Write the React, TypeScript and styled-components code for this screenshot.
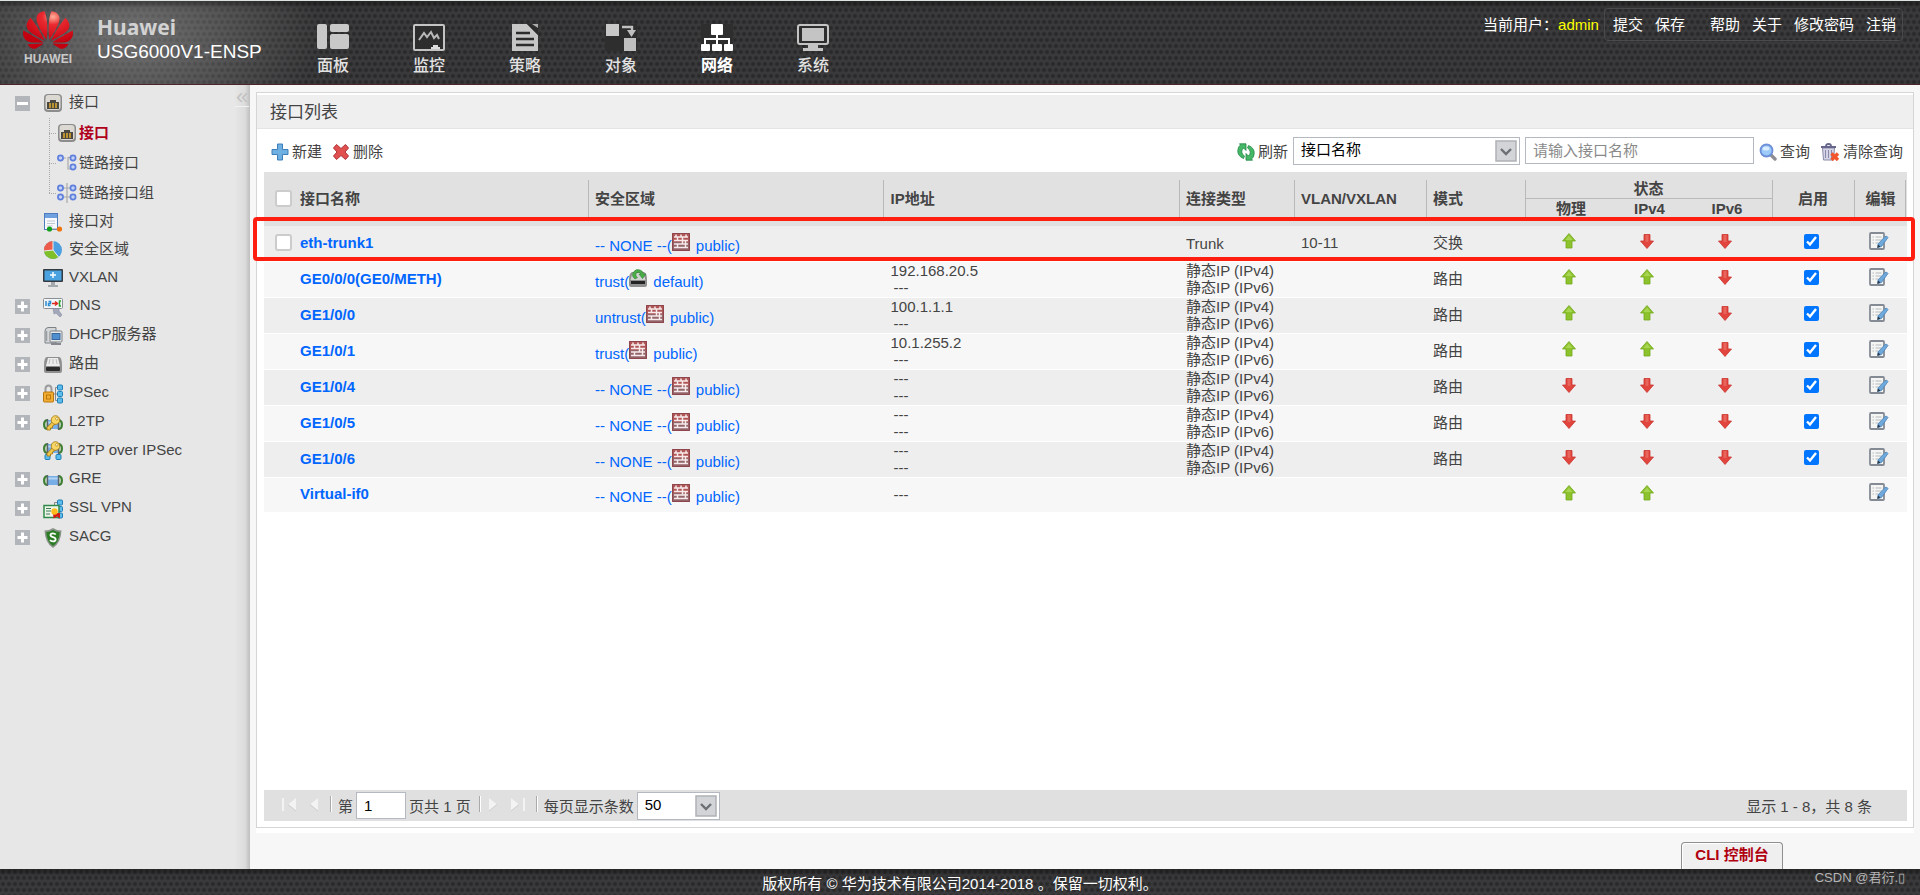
import React from 'react';
import styled, { createGlobalStyle, css } from 'styled-components';
import { SiHuawei } from 'react-icons/si';

const sans = `"Liberation Sans", Arial, "Noto Sans CJK SC", sans-serif`;

const GlobalStyle = createGlobalStyle`
  *, *::before, *::after { box-sizing: border-box; }
  body { margin: 0; font: 15px/17px ${sans}; color: #444; background: #f7f7f7; }
  button, input, select { font: inherit; color: inherit; }
  button { border: 0; padding: 0; background: none; cursor: pointer; }
  a { text-decoration: none; color: inherit; }
  svg { display: block; flex: none; }
`;

const studs = css`
  background-color: #3b3b3d;
  background-image:
    linear-gradient(rgba(0, 0, 0, 0.35), transparent 8px),
    radial-gradient(ellipse 190px 120px at 130px 35px, rgba(170, 170, 170, 0.5), transparent),
    radial-gradient(circle at 3px 3px, #29292a 1px, transparent 3px),
    radial-gradient(circle at 3px 3px, #29292a 1px, transparent 3px);
  background-size: 100% 100%, 100% 100%, 6px 12px, 6px 12px;
  background-position: 0 0, 0 0, 0 0, 3px 6px;
`;

const Page = styled.div`
  min-height: 100vh;
  display: flex;
  flex-direction: column;
`;

/* ---------- top bar ---------- */
const Header = styled.header`
  ${studs}
  height: 85px;
  display: flex;
  border-top: 1px solid #dde3e0;
  border-bottom: 1px solid #4b2528;
  color: #fff;
`;
const Brand = styled.div`
  width: 285px;
  padding: 10px 0 0 23px;
  display: flex;
  gap: 24px;
`;
const Logo = styled.div`
  width: 50px;
  height: 54px;
  overflow: hidden;
  text-align: center;
  font-size: 12px;
  font-weight: bold;
  line-height: 16px;
  color: #c9c9c9;
`;
const Flower = styled(SiHuawei)`
  fill: url(#petals);
  width: 50px;
  height: 50px;
  margin: -6px 0 -4px;
`;
const BrandText = styled.div`
  padding-top: 4px;
  font-size: 19px;
  line-height: 26px;
  white-space: nowrap;
`;
const BrandName = styled.div`
  font: bold 21px/24px "Noto Sans", sans-serif;
  color: #d2d2d2;
`;
const Nav = styled.nav`
  display: flex;
`;
const NavItem = styled.a<{ $active?: boolean }>`
  width: 96px;
  padding-top: 23px;
  display: flex;
  flex-direction: column;
  align-items: center;
  gap: 4px;
  font-size: 16px;
  line-height: 20px;
  font-weight: ${(p) => (p.$active ? 'bold' : '500')};
  color: ${(p) => (p.$active ? '#fff' : '#e2e2e2')};
`;
const Account = styled.div`
  margin-left: auto;
  padding: 7px 17px 0 0;
  display: flex;
  align-items: flex-start;
  line-height: 33px;
  white-space: nowrap;
`;
const UserName = styled.span`
  color: #ff0;
  margin-right: 5px;
`;
const AccountBox = styled.div`
  display: flex;
  border: 1px solid #4a4a4c;
  border-radius: 4px;
  height: 33px;
  line-height: 31px;
  padding: 0 6px 0 8px;
  gap: 12px;
`;
const AccountGroup = styled.div`
  display: flex;
  gap: 12px;
  & + & { margin-left: 13px; }
`;

/* ---------- side tree ---------- */
const Body = styled.div`
  flex: 1;
  display: flex;
`;
const Side = styled.aside`
  position: relative;
  width: 250px;
  flex: none;
  padding-top: 3px;
  background: linear-gradient(to right, #e7e7e7 234px, #dcdcdc 245px, #bebebe);
`;
const Collapse = styled.button`
  position: absolute;
  top: 2px;
  right: 1px;
  width: 14px;
  height: 20px;
  font-size: 22px;
  line-height: 16px;
  color: #c3c3c3;
  border-bottom: 1px solid #f2f2f2;
`;
const Tree = styled.ul`
  list-style: none;
  margin: 0;
  padding: 0;
`;
const TreeRow = styled.li<{ $h: number }>`
  height: ${(p) => p.$h}px;
  padding-left: 15px;
  display: flex;
  align-items: center;
`;
const Expander = styled.button`
  width: 15px;
  height: 15px;
  background: #b2b5b9;
  display: grid;
  place-items: center;
`;
const NoExpander = styled.span`
  width: 15px;
`;
const TreeLink = styled.a`
  display: flex;
  align-items: center;
  margin-left: 13px;
  gap: 6px;
`;
const TreeLabel = styled.span`
  padding-bottom: 4px;
`;
const SubList = styled.ul`
  list-style: none;
  margin: 0 0 0 49px;
  padding: 0;
`;
const SubRow = styled.li`
  height: 30px;
  background-image:
    repeating-linear-gradient(to right, #aaa 0 1px, transparent 1px 2px),
    repeating-linear-gradient(#aaa 0 1px, transparent 1px 2px);
  background-size: 8px 1px, 1px 30px;
  background-position: 0 50%, 0 0;
  background-repeat: no-repeat;
  &:last-child { background-size: 8px 1px, 1px 15px; }
`;
const SubLink = styled.a`
  height: 30px;
  margin-left: 8px;
  display: flex;
  align-items: center;
  gap: 2px;
`;
const SubLabel = styled.span<{ $active?: boolean }>`
  padding-bottom: 2px;
  ${(p) => p.$active && 'color: #b0001c; font-weight: bold;'}
`;

/* ---------- main panel ---------- */
const Main = styled.main`
  flex: 1;
  min-width: 0;
  padding: 7px 6px 0;
  display: flex;
  flex-direction: column;
`;
const Panel = styled.section`
  flex: 1;
  display: flex;
  flex-direction: column;
  background: #fff;
  border: 1px solid #d5d5d5;
  padding-top: 2px;
  box-shadow: 0 5px #fff;
`;
const PanelTitle = styled.h1`
  margin: 0;
  height: 34px;
  padding-left: 13px;
  font-size: 17px;
  font-weight: normal;
  line-height: 35px;
  background: #efefef;
  border-bottom: 1px solid #e4e4e4;
`;
const Toolbar = styled.div`
  height: 43px;
  padding: 0 10px 0 14px;
  display: flex;
  align-items: center;
`;
const ToolGroup = styled.div`
  display: flex;
  align-items: center;
  gap: 10px;
`;
const Search = styled.form`
  margin-left: auto;
  display: flex;
  align-items: center;
  gap: 5px;
`;
const ToolButton = styled.button`
  padding-top: 2px;
  display: flex;
  align-items: center;
  gap: 3px;
  white-space: nowrap;
  line-height: 20px;
`;
const SelectBox = styled.span<{ $w: number }>`
  position: relative;
  width: ${(p) => p.$w}px;
  height: 28px;
  select {
    appearance: none;
    width: 100%;
    height: 28px;
    padding: 0 30px 2px 7px;
    border: 1px solid #b4b8c0;
    border-radius: 0;
    background: #fff;
    color: #000;
  }
  svg {
    position: absolute;
    top: 3px;
    right: 3px;
    pointer-events: none;
  }
`;
const TextBox = styled.input<{ $w: number }>`
  width: ${(p) => p.$w}px;
  height: 27px;
  padding: 0 7px;
  border: 1px solid #b4b8c0;
  background: #fff;
  color: #000;
  &::placeholder { color: #8a8a8a; opacity: 1; }
`;
const GridArea = styled.div`
  flex: 1;
  position: relative;
  margin: 0 6px 0 7px;
`;
const Grid = styled.table`
  width: 100%;
  table-layout: fixed;
  border-collapse: collapse;
  td, th { padding: 0; text-align: left; }
`;
const ruleV = 'linear-gradient(#b9b9b9, #b9b9b9) no-repeat';
const HeadRow = styled.tr`
  height: 27px;
  background: #e1e1e1;
`;
const Th = styled.th<{ $rule?: boolean; $end?: boolean; $center?: boolean }>`
  && {
    padding-left: ${(p) => (p.$center ? 0 : 7)}px;
    padding-bottom: 2px;
    text-align: ${(p) => (p.$center ? 'center' : 'left')};
  }
  background: ${(p) => (p.$end ? `${ruleV} right 1px top 8px / 1px 38px,` : '')}
    ${(p) => (p.$rule === false ? 'none' : `${ruleV} 0 8px / 1px 38px`)};
`;
const GroupTh = styled.th`
  && { text-align: center; padding-top: 6px; }
  background: ${ruleV} 0 8px / 1px 30px, ${ruleV} 0 100% / 100% 1px;
`;
const SubTh = styled.th<{ $first?: boolean }>`
  && { text-align: center; padding: 0 0 9px; }
  background: ${(p) => (p.$first ? `${ruleV} 0 0 / 1px 19px` : 'none')};
`;
const Row = styled.tr<{ $tall: boolean }>`
  height: ${(p) => (p.$tall ? 36 : 35)}px;
  background: #f7f7f7;
  border-bottom: 1px solid #fff;
  &:nth-child(odd) { background: #eee; }
`;
const Td = styled.td`
  && { padding-left: 7px; }
`;
const LineTd = styled.td<{ $pad?: number }>`
  && { padding: 0 0 2px ${(p) => p.$pad ?? 7}px; }
`;
const IconTd = styled.td`
  && { text-align: center; padding: 0 4px 6px 0; }
  svg { display: inline-block; vertical-align: middle; }
`;
const NameCell = styled.div`
  display: flex;
  align-items: center;
  gap: 8px;
  padding-left: 11px;
`;
const PickBox = styled.input`
  appearance: none;
  margin: 0;
  width: 17px;
  height: 17px;
  border: 2px solid #ccc;
  border-radius: 3px;
  background: #fff;
`;
const NoPick = styled.span`
  width: 17px;
`;
const NameLink = styled.a`
  color: #06f;
  font-weight: bold;
`;
const ZoneLink = styled.a`
  color: #06f;
  svg { display: inline-block; vertical-align: baseline; margin-right: 2px; }
`;
const Enable = styled.input`
  width: 15px;
  height: 15px;
  margin: 0;
  vertical-align: middle;
  accent-color: #0075ff;
`;
const Dash = styled.div`
  padding-left: 3px;
`;
const Highlight = styled.div`
  position: absolute;
  top: 45px;
  left: -11px;
  right: -8px;
  height: 44px;
  border: 4px solid #ff1e10;
  border-radius: 4px;
  pointer-events: none;
`;
const Pager = styled.div`
  height: 31px;
  margin: 0 6px 6px 7px;
  padding: 0 32px 0 17px;
  display: flex;
  align-items: center;
  background: #e0e0e0;
  white-space: nowrap;
`;
const PageButton = styled.button`
  width: 17px;
  height: 24px;
  margin-right: 5px;
  padding-bottom: 2px;
`;
const Sep = styled.i`
  width: 2px;
  height: 16px;
  margin: 0 6px 4px 5px;
  background: linear-gradient(to right, #aaa 1px, #fff 1px);
`;
const PagerText = styled.span`
  padding: 2px 3px 0 0;
`;
const PageCount = styled(PagerText)`
  padding-left: 3px;
`;
const PagerStatus = styled(PagerText)`
  margin-left: auto;
`;
const ConsoleBar = styled.div`
  height: 41px;
  padding-right: 131px;
  display: flex;
  justify-content: flex-end;
  align-items: flex-end;
`;
const ConsoleButton = styled.button`
  width: 102px;
  height: 27px;
  padding-bottom: 4px;
  border: 1px solid #8f8f8f;
  border-bottom: 0;
  border-radius: 4px 4px 0 0;
  background: #efefef;
  box-shadow: inset 1px 1px #fff;
  color: #b0000f;
  font-weight: bold;
`;
const Footer = styled.footer`
  ${studs}
  background-position: 0 0, -400px 0, 0 0, 3px 6px;
  background-repeat: repeat, no-repeat, repeat, repeat;
  position: relative;
  height: 26px;
  padding-top: 2px;
  text-align: center;
  line-height: 26px;
  color: #fff;
`;
const Watermark = styled.span`
  position: absolute;
  right: 15px;
  top: -4px;
  font-size: 13px;
  color: #b5b5b5;
`;

/* ---------- icons ---------- */
const navIcons: Record<string, React.ReactNode> = {
  panel: (
    <g fill="#c8c8c8">
      <rect x="0" y="0" width="10" height="25" rx="2" />
      <rect x="13" y="0" width="19" height="8" rx="2" />
      <rect x="13" y="10" width="19" height="15" rx="2" />
    </g>
  ),
  monitor: (
    <g>
      <rect x="1" y="1" width="30" height="25" rx="1" fill="#2d2d2d" stroke="#c4c4c4" strokeWidth="2" />
      <path d="M6 16l5-7 3 4 4-5 3 6 3-3 2 4" fill="none" stroke="#b9b9b9" strokeWidth="2" />
      <path d="M18 25v-2h2v-2h5v2h2v2z" fill="#ddd" />
    </g>
  ),
  policy: (
    <g>
      <path d="M3 0h15l11 11v16H3z" fill="#c6c6c6" />
      <path d="M18 0l11 11V5L23 0z" fill="#2c2c2c" />
      <path d="M23 0h6v4z" fill="#ababab" />
      <path d="M7 9h14M7 15h18M7 21h18" stroke="#2c2c2c" strokeWidth="2.4" />
    </g>
  ),
  object: (
    <g>
      <rect width="32" height="27" fill="#2e2e2e" />
      <rect x="1" y="0" width="13" height="12" fill="#c8c8c8" />
      <rect x="19" y="14" width="12" height="13" fill="#c0c0c0" />
      <path d="M17 3h10v4" fill="none" stroke="#c0c0c0" strokeWidth="2.4" />
      <path d="M22 6h9l-4.500 7z" fill="#c0c0c0" />
    </g>
  ),
  network: (
    <g>
      <rect width="32" height="27" fill="#2e2e2e" />
      <path d="M16 10v10M4 20v-5h24v5" fill="none" stroke="#fff" strokeWidth="2" />
      <rect x="10" y="0" width="12" height="11" rx="1" fill="#fff" />
      <rect x="0" y="20" width="9" height="7" rx="1" fill="#fff" />
      <rect x="11" y="20" width="10" height="7" rx="1" fill="#fff" />
      <rect x="23" y="20" width="9" height="7" rx="1" fill="#fff" />
    </g>
  ),
  system: (
    <g>
      <rect x="1" y="1" width="30" height="19" rx="2" fill="#2e2e2e" stroke="#c4c4c4" strokeWidth="2" />
      <rect x="5" y="4" width="22" height="13" fill="#c4c4c4" />
      <path d="M11 20h10v4h5v3H6v-3h5z" fill="#c4c4c4" />
    </g>
  ),
};
const NavIcon = ({ name }: { name: string }) => (
  <svg width="32" height="28" viewBox="0 0 32 28" aria-hidden>{navIcons[name]}</svg>
);

const tunnel = (
  <g>
    <path d="M5 6Q1 6 1 10.500T5 15" fill="#b9d3b0" stroke="#3f7f35" strokeWidth="2" />
    <path d="M15 6q4 0 4 4.500T15 15" fill="#b9d3b0" stroke="#3f7f35" strokeWidth="2" />
    <rect x="5" y="6" width="10" height="9" fill="#78aee6" />
    <path d="M5 8.500h10" stroke="#b4d4f5" strokeWidth="2" />
    <path d="M4.500 5v11M15.500 5v11" stroke="#5b6270" strokeWidth="1.400" />
  </g>
);
const key = (
  <g>
    <path d="M10 7l-6 6.500V16h3.500v-2h2v-2l3-2" fill="#f2c648" stroke="#a3750e" strokeWidth=".8" />
    <circle cx="12.500" cy="6" r="4.300" fill="#f8d665" stroke="#a3750e" strokeWidth=".8" />
    <circle cx="13.800" cy="4.800" r="1.300" fill="#fff6cf" stroke="#a3750e" strokeWidth=".6" />
  </g>
);
const blueBoxes = (
  <g fill="#5cbcec" stroke="#1f7fb5">
    <rect x="14.500" y="1" width="5" height="5" rx="1" />
    <rect x="14.500" y="7.500" width="5" height="5" rx="1" />
    <rect x="14.500" y="14" width="5" height="5" rx="1" />
  </g>
);
const node = (cx: number, cy: number) => (
  <circle cx={cx} cy={cy} r="2.600" fill="#c4d2f6" stroke="#5f7fdc" strokeWidth="1.700" />
);
const treeIcons: Record<string, React.ReactNode> = {
  port: (
    <g>
      <rect x="1" y="1" width="18" height="18" rx="4" fill="#8c8c8c" />
      <rect x="2.500" y="2" width="15" height="15" rx="3" fill="#dcd8d2" />
      <path d="M4 9h3V7h6v2h3v7H4z" fill="#4b4843" />
      <path d="M7 10v5M10 10v5M13 10v5" stroke="#d8a62c" strokeWidth="1.600" />
    </g>
  ),
  link: (
    <g>
      <path d="M7 5h2M11 4v12h3M11 4.500h3" fill="none" stroke="#aaa" strokeWidth="1.200" />
      {node(3.5, 5)}{node(16, 5)}{node(16, 14)}
    </g>
  ),
  linkGroup: (
    <g>
      <path d="M10 0v20M6 5h8M6 14h8" stroke="#aaa" strokeWidth="1.200" />
      {node(3.5, 5)}{node(16, 5)}{node(3.5, 14)}{node(16, 14)}
    </g>
  ),
  pair: (
    <g>
      <rect x="1.500" y="1.500" width="13" height="16" fill="#f7f9fc" stroke="#4f7bbf" />
      <rect x="2" y="2" width="12" height="4" fill="#6fa0df" />
      <path d="M4 9h8M4 11.500h8M4 14h6" stroke="#c2c8d2" />
      <path d="M7 17h9" stroke="#999" />
      <circle cx="6.500" cy="17" r="2.600" fill="#12a01c" />
      <circle cx="16.500" cy="17" r="2.600" fill="#f0720c" />
    </g>
  ),
  zone: (
    <g>
      <circle cx="10" cy="10" r="9" fill="#4d9fe0" />
      <path d="M10 10L1 11A9 9 0 0 1 10 1z" fill="#ef5b4a" />
      <path d="M10 10L1 11A9 9 0 0 0 15.500 17z" fill="#7fc02a" />
      <path d="M10 1v9l5.500 7M10 10l-9 1" stroke="#eee" fill="none" />
    </g>
  ),
  vxlan: (
    <g>
      <rect x="0" y="1" width="20" height="13" rx="1" fill="#333a42" />
      <rect x="1.500" y="2.500" width="17" height="10" fill="#4aa3e0" />
      <path d="M10 4v6M7 7h6" stroke="#fff" strokeWidth="1.400" />
      <path d="M8 14h4v3h3v2H5v-2h3z" fill="#a4a9ad" />
    </g>
  ),
  dns: (
    <g>
      <rect x="0.500" y="1.500" width="19" height="10" rx="1" fill="#f2f6f8" stroke="#8a8f94" />
      <path d="M3 4v5M5.500 4.500h2v2h-2v2h2" stroke="#2b8cd0" fill="none" strokeWidth="1.500" />
      <path d="M9 6.500h5M12 4.500l2.500 2-2.500 2" stroke="#e02b20" fill="none" strokeWidth="1.500" />
      <path d="M18 4h-1.500v5H18" stroke="#2fa32b" fill="none" strokeWidth="1.500" />
      <path d="M10 11.500h6V14l3 4-2 2-4-4-2 1z" fill="#a3a8ba" stroke="#868b9a" strokeWidth=".6" />
    </g>
  ),
  dhcp: (
    <g>
      <path d="M2 5q0-3 3-3.500h8V17H2z" fill="#d4d6d8" stroke="#7d8186" />
      <path d="M3.500 5v10" stroke="#9a9ea2" strokeWidth="1.500" />
      <rect x="7" y="5" width="12" height="11" rx="1" fill="#e6e8ea" stroke="#7d8186" />
      <rect x="9" y="7.500" width="8" height="6" fill="#4f8fcf" stroke="#36669a" />
      <path d="M8 18h10" stroke="#85898d" strokeWidth="2" />
    </g>
  ),
  route: (
    <g>
      <path d="M4 2h12q3 0 3 9v5q0 2-2 2H3q-2 0-2-2v-5q0-9 3-9z" fill="#8f8f8f" />
      <path d="M5 3h10l2 8H3z" fill="#ededed" />
      <path d="M7 4L6 9M10 4v5M13 4l1 5" stroke="#bcbcbc" />
      <rect x="3" y="12" width="14" height="4" rx="1" fill="#2c2c2c" />
    </g>
  ),
  ipsec: (
    <g>
      <path d="M11 10h4M12.500 3.500v13M12.500 3.500h3M12.500 16.500h3" stroke="#888" fill="none" />
      {blueBoxes}
      <path d="M2.500 8V5q0-3.500 3-3.500t3 3.500v3" fill="none" stroke="#9c9c9c" strokeWidth="2" />
      <rect x="0.500" y="8" width="10" height="10" rx="1" fill="#f3ad2e" stroke="#b87612" />
      <rect x="3.500" y="11" width="4" height="4" fill="none" stroke="#b87612" />
    </g>
  ),
  l2tp: <g><g transform="translate(0 1)">{tunnel}</g><g transform="translate(0 1)">{key}</g></g>,
  l2tpIpsec: (
    <g>
      <g transform="translate(0 -3)">{tunnel}</g>
      <g fill="#5cbcec" stroke="#1f7fb5">
        <rect x="2" y="13.500" width="5" height="5" rx="1" />
        <rect x="13" y="13.500" width="5" height="5" rx="1" />
      </g>
      <g transform="translate(0 -1)">{key}</g>
    </g>
  ),
  gre: tunnel,
  ssl: (
    <g>
      <path d="M11.500 6V3.500h4" stroke="#888" fill="none" />
      {blueBoxes}
      <rect x="1" y="6.500" width="15" height="12" fill="#eef6ea" stroke="#2f8a4a" strokeWidth="1.500" />
      <path d="M3 9.500h5M3 12h5M3 15h4" stroke="#3b7a55" />
      <path d="M10 14h7v5.500l-3-2-3.500 2z" fill="#d21a12" />
      <circle cx="11.500" cy="12.500" r="3.200" fill="#fbbd1c" />
    </g>
  ),
  sacg: (
    <g>
      <path d="M10 0q4 2.500 8.500 2.500Q18 15 10 20 2 15 1.500 2.500 6 2.500 10 0z" fill="#8b938b" />
      <path d="M10 2q3 2 6.800 2.200Q16 14 10 18 4 14 3.200 4.200 7 4 10 2z" fill="#2a7d22" />
      <path d="M12.800 6.500q-1-1.200-3-1.200-2.300 0-2.300 1.800 0 1.400 2.500 2 2.600.6 2.600 2.300 0 1.900-2.600 1.900-2 0-3-1.300" fill="none" stroke="#fff" strokeWidth="1.800" />
    </g>
  ),
};
const TreeIcon = ({ name }: { name: string }) => (
  <svg width="20" height="20" viewBox="0 0 20 20" aria-hidden>{treeIcons[name]}</svg>
);
const Small = ({ children }: { children: React.ReactNode }) => (
  <svg width="18" height="18" viewBox="0 0 18 18" aria-hidden>{children}</svg>
);
const AddIcon = () => (
  <Small><path d="M6.500 1h5v5.500H17v5h-5.500V17h-5v-5.500H1v-5h5.500z" fill="#6fb0e2" stroke="#3f7fb8" strokeLinejoin="round" /></Small>
);
const DeleteIcon = () => (
  <Small><path d="M4.500 1.500L9 5.500l4.500-4 3 3.500-3.500 4 3.500 4-3 3.500-4.500-4-4.500 4-3-3.500L5 9 1.500 5z" fill="#e0504f" stroke="#b03236" strokeLinejoin="round" /></Small>
);
const RefreshIcon = () => (
  <Small>
    <path d="M6.500 15.500Q.5 13 .8 7.500 1 3.500 3.500 2L2.500.8H9V7.500L6.700 5Q4.500 6.500 4.700 9q.2 2.500 2.800 4z" fill="#45b868" stroke="#1f8742" strokeLinejoin="round" strokeWidth=".8" />
    <path d="M11.500 2.500Q17.500 5 17.200 10.500 17 14.500 14.500 16l1 1.200H9V10.500l2.300 2.500q2.200-1.500 2-4-.2-2.500-2.800-4z" fill="#45b868" stroke="#1f8742" strokeLinejoin="round" strokeWidth=".8" />
  </Small>
);
const SearchIcon = () => (
  <Small>
    <path d="M11.500 11.500l4.500 4.500" stroke="#8d8d93" strokeWidth="3.400" strokeLinecap="round" />
    <circle cx="7.500" cy="7.500" r="6" fill="#9ccbfa" stroke="#6c8fd8" strokeWidth="1.800" />
    <ellipse cx="7" cy="5.500" rx="3.500" ry="2" fill="#d8edff" />
  </Small>
);
const ClearIcon = () => (
  <svg width="20" height="18" viewBox="0 0 20 18" aria-hidden>
    <path d="M2.500 5h12l-1 12h-10z" fill="#d4d4e6" stroke="#8a8aa8" />
    <path d="M5.500 7v8M8.500 7v8M11.500 7v8" stroke="#8a8aa8" />
    <path d="M1 4h15M6 3q0-2 2.500-2T11 3" fill="none" stroke="#66668c" strokeWidth="1.800" />
    <path d="M11.500 10.500l6.500 6.500M18 10.500L11.500 17" stroke="#f2552e" strokeWidth="3.400" />
  </svg>
);
const WallIcon = () => (
  <Small>
    <path d="M0 0h18v9H0z" fill="#b05656" />
    <path d="M0 9h18v9H0z" fill="#93656a" />
    <path d="M2 4h14M2 7.500h14M2 11h14M2 14.500h14M9 1.500v3M5.500 4v3.500M10.500 4v7M5.500 11v3.500M13.500 7.500v7M4 1.500v2M14 1.500v2" stroke="#f6eaea" strokeWidth="1.500" />
    <path d="M.5 .5h17v17H.5z" fill="none" stroke="#8e464c" />
  </Small>
);
const RouterIcon = () => (
  <Small>
    <path d="M3 3h12q3 1 3 8v5q0 2-2 2H2q-2 0-2-2v-5q0-7 3-8z" fill="#8f8f8f" />
    <path d="M3.500 4h11l2 7h-15z" fill="#cfd2cf" />
    <rect x="2" y="12" width="14" height="3" fill="#242424" />
    <path d="M6 10Q2 7 4.500 3 7-.5 11 1q3 1 3.500 4H17l-3.500 4.500L10 5h2Q11 3 9 3.200 6.500 3.500 6.800 6q.2 1.500 1.700 2.500z" fill="#4bae49" stroke="#27802c" strokeWidth=".6" />
  </Small>
);
const ArrowIcon = ({ up }: { up: boolean }) =>
  up ? (
    <svg width="14" height="16" viewBox="0 0 14 16" role="img" aria-label="up">
      <path d="M7 .5L13.500 8H10v7H4V8H.5z" fill="#8cc22c" stroke="#74a81e" strokeWidth=".8" strokeLinejoin="round" />
      <path d="M7 2.500L10.500 7H3.500z" fill="#a8d552" />
    </svg>
  ) : (
    <svg width="14" height="16" viewBox="0 0 14 16" role="img" aria-label="down">
      <path d="M4 1.500h6v6.500h3.500L7 15.500.5 8H4z" fill="#e2453d" stroke="#c9352f" strokeWidth=".8" strokeLinejoin="round" />
      <path d="M5.500 2v7h3V2z" fill="#e9655b" />
    </svg>
  );
const EditIcon = () => (
  <svg width="20" height="18" viewBox="0 0 20 18" aria-hidden>
    <rect x="1" y="1" width="14" height="16" rx="1" fill="#f5f6f4" stroke="#858b94" strokeWidth="1.800" />
    <path d="M3.500 5h1.500M3.500 8h1.500M3.500 11h1.500M6.500 5h6M6.500 8h6M6.500 11h3" stroke="#b5b9bd" />
    <path d="M9 12L16 4.500q2-1 3 1L12.500 14.500 9 15.500z" fill="#6fa9dc" stroke="#4a82b8" strokeWidth=".8" />
    <path d="M8 16l1-3.500 2.500 2z" fill="#2a3a4a" />
  </svg>
);
const DropArrow = () => (
  <svg width="22" height="22" viewBox="0 0 22 22" aria-hidden>
    <rect x="1" y="1" width="20" height="20" fill="#d2d4d7" stroke="#aeb1b6" strokeWidth="1.500" />
    <path d="M6 9l5 5 5-5" fill="none" stroke="#6c6f74" strokeWidth="2.400" />
  </svg>
);
const PageIcon = ({ dir, end }: { dir: 'l' | 'r'; end?: boolean }) => (
  <svg width="17" height="16" viewBox="0 0 17 16" aria-hidden>
    <g transform={dir === 'r' ? 'translate(17 0) scale(-1 1)' : undefined} fill="#f3f3f3">
      <path d="M15 1v13L7 7.500z" />
      <path d="M15 14L7 7.500" stroke="#cdcdcd" />
      {end && <rect x="1" y="1" width="2" height="13" />}
    </g>
  </svg>
);

/* ---------- data ---------- */
const nav = [
  ['panel', '面板'], ['monitor', '监控'], ['policy', '策略'],
  ['object', '对象'], ['network', '网络'], ['system', '系统'],
];
const subItems = [['port', '接口'], ['link', '链路接口'], ['linkGroup', '链路接口组']];
const treeItems: [string, string, boolean][] = [
  ['pair', '接口对', false], ['zone', '安全区域', false], ['vxlan', 'VXLAN', false],
  ['dns', 'DNS', true], ['dhcp', 'DHCP服务器', true], ['route', '路由', true],
  ['ipsec', 'IPSec', true], ['l2tp', 'L2TP', true], ['l2tpIpsec', 'L2TP over IPSec', false],
  ['gre', 'GRE', true], ['ssl', 'SSL VPN', true], ['sacg', 'SACG', true],
];
type Item = {
  name: string; zone: string; vsys: string; ip: string[]; type: string[];
  vlan?: string; mode?: string; state: boolean[]; enabled: boolean; pick?: boolean;
};
const both = ['静态IP (IPv4)', '静态IP (IPv6)'];
const items: Item[] = [
  { name: 'eth-trunk1', zone: '-- NONE --', vsys: 'public', ip: [], type: ['Trunk'], vlan: '10-11', mode: '交换', state: [true, false, false], enabled: true, pick: true },
  { name: 'GE0/0/0(GE0/METH)', zone: 'trust', vsys: 'default', ip: ['192.168.20.5', '---'], type: both, mode: '路由', state: [true, true, false], enabled: true },
  { name: 'GE1/0/0', zone: 'untrust', vsys: 'public', ip: ['100.1.1.1', '---'], type: both, mode: '路由', state: [true, true, false], enabled: true },
  { name: 'GE1/0/1', zone: 'trust', vsys: 'public', ip: ['10.1.255.2', '---'], type: both, mode: '路由', state: [true, true, false], enabled: true },
  { name: 'GE1/0/4', zone: '-- NONE --', vsys: 'public', ip: ['---', '---'], type: both, mode: '路由', state: [false, false, false], enabled: true },
  { name: 'GE1/0/5', zone: '-- NONE --', vsys: 'public', ip: ['---', '---'], type: both, mode: '路由', state: [false, false, false], enabled: true },
  { name: 'GE1/0/6', zone: '-- NONE --', vsys: 'public', ip: ['---', '---'], type: both, mode: '路由', state: [false, false, false], enabled: true },
  { name: 'Virtual-if0', zone: '-- NONE --', vsys: 'public', ip: ['---'], type: [], state: [true, true], enabled: false },
];
const colWidths = [324, 0, 0, 115, 132, 99, 92, 65, 90, 82, 53];

export default function App() {
  return (
    <Page>
      <GlobalStyle />
      <Header>
        <Brand>
          <Logo>
            <svg width="0" height="0" aria-hidden>
              <defs>
                <radialGradient id="petals" cx="60%" cy="15%" r="70%">
                  <stop offset="0" stopColor="#ffb09a" />
                  <stop offset="0.300" stopColor="#ea2a30" />
                  <stop offset="1" stopColor="#c3000f" />
                </radialGradient>
              </defs>
            </svg>
            <Flower aria-hidden />
            HUAWEI
          </Logo>
          <BrandText>
            <BrandName>Huawei</BrandName>
            USG6000V1-ENSP
          </BrandText>
        </Brand>
        <Nav>
          {nav.map(([icon, label]) => (
            <NavItem key={icon} href="#" $active={icon === 'network'}>
              <NavIcon name={icon} />
              {label}
            </NavItem>
          ))}
        </Nav>
        <Account>
          <span>当前用户：</span>
          <UserName>admin</UserName>
          <AccountBox>
            <AccountGroup>
              <a href="#">提交</a>
              <a href="#">保存</a>
            </AccountGroup>
            <AccountGroup>
              <a href="#">帮助</a>
              <a href="#">关于</a>
              <a href="#">修改密码</a>
              <a href="#">注销</a>
            </AccountGroup>
          </AccountBox>
        </Account>
      </Header>

      <Body>
        <Side>
          <Collapse aria-label="收起">«</Collapse>
          <Tree>
            <TreeRow $h={30}>
              <Expander aria-label="折叠">
                <svg width="15" height="15" aria-hidden><path d="M2 7.500h11" stroke="#fff" strokeWidth="3" /></svg>
              </Expander>
              <TreeLink href="#"><TreeIcon name="port" /><TreeLabel>接口</TreeLabel></TreeLink>
            </TreeRow>
            <li>
              <SubList>
                {subItems.map(([icon, label], i) => (
                  <SubRow key={label}>
                    <SubLink href="#"><TreeIcon name={icon} /><SubLabel $active={i === 0}>{label}</SubLabel></SubLink>
                  </SubRow>
                ))}
              </SubList>
            </li>
            {treeItems.map(([icon, label, expandable]) => (
              <TreeRow key={icon} $h={expandable ? 29 : 28}>
                {expandable ? (
                  <Expander aria-label="展开">
                    <svg width="15" height="15" aria-hidden><path d="M2.500 7.500h10M7.500 2.500v10" stroke="#fff" strokeWidth="3" /></svg>
                  </Expander>
                ) : <NoExpander />}
                <TreeLink href="#"><TreeIcon name={icon} /><TreeLabel>{label}</TreeLabel></TreeLink>
              </TreeRow>
            ))}
          </Tree>
        </Side>

        <Main>
          <Panel>
            <PanelTitle>接口列表</PanelTitle>
            <Toolbar>
              <ToolGroup>
                <ToolButton><AddIcon />新建</ToolButton>
                <ToolButton><DeleteIcon />删除</ToolButton>
              </ToolGroup>
              <Search onSubmit={(e) => e.preventDefault()}>
                <ToolButton type="button"><RefreshIcon />刷新</ToolButton>
                <SelectBox $w={227}>
                  <select aria-label="查询字段"><option>接口名称</option></select>
                  <DropArrow />
                </SelectBox>
                <TextBox $w={229} aria-label="查询内容" placeholder="请输入接口名称" />
                <ToolGroup>
                  <ToolButton type="submit"><SearchIcon />查询</ToolButton>
                  <ToolButton type="reset"><ClearIcon />清除查询</ToolButton>
                </ToolGroup>
              </Search>
            </Toolbar>

            <GridArea>
              <Grid>
                <colgroup>
                  {colWidths.map((w, i) => <col key={i} width={w || undefined} />)}
                </colgroup>
                <thead>
                  <HeadRow>
                    <Th rowSpan={2} $rule={false} $center>
                      <NameCell><PickBox type="checkbox" aria-label="全选" />接口名称</NameCell>
                    </Th>
                    <Th rowSpan={2}>安全区域</Th>
                    <Th rowSpan={2}>IP地址</Th>
                    <Th rowSpan={2}>连接类型</Th>
                    <Th rowSpan={2}>VLAN/VXLAN</Th>
                    <Th rowSpan={2}>模式</Th>
                    <GroupTh colSpan={3}>状态</GroupTh>
                    <Th rowSpan={2} $center>启用</Th>
                    <Th rowSpan={2} $center $end>编辑</Th>
                  </HeadRow>
                  <HeadRow>
                    <SubTh $first>物理</SubTh>
                    <SubTh>IPv4</SubTh>
                    <SubTh>IPv6</SubTh>
                  </HeadRow>
                </thead>
                <tbody>
                  {items.map((it) => (
                    <Row key={it.name} $tall={it.ip.length > 1}>
                      <LineTd $pad={0}>
                        <NameCell>
                          {it.pick ? <PickBox type="checkbox" aria-label={it.name} /> : <NoPick />}
                          <NameLink href="#">{it.name}</NameLink>
                        </NameCell>
                      </LineTd>
                      <Td>
                        <ZoneLink href="#">
                          {it.zone}({it.vsys === 'default' ? <RouterIcon /> : <WallIcon />} {it.vsys})
                        </ZoneLink>
                      </Td>
                      <Td>{it.ip.map((s, i) => (s === '---' ? <Dash key={i}>{s}</Dash> : <div key={i}>{s}</div>))}</Td>
                      <Td>{it.type.map((s) => <div key={s}>{s}</div>)}</Td>
                      <LineTd>{it.vlan}</LineTd>
                      <LineTd>{it.mode}</LineTd>
                      {[0, 1, 2].map((i) => (
                        <IconTd key={i}>{it.state[i] !== undefined && <ArrowIcon up={it.state[i]} />}</IconTd>
                      ))}
                      <IconTd>{it.enabled && <Enable type="checkbox" defaultChecked aria-label={`启用 ${it.name}`} />}</IconTd>
                      <IconTd><button aria-label={`编辑 ${it.name}`}><EditIcon /></button></IconTd>
                    </Row>
                  ))}
                </tbody>
              </Grid>
              <Highlight />
            </GridArea>

            <Pager>
              <PageButton aria-label="首页"><PageIcon dir="l" end /></PageButton>
              <PageButton aria-label="上一页"><PageIcon dir="l" /></PageButton>
              <Sep />
              <PagerText><label htmlFor="page">第</label></PagerText>
              <TextBox id="page" $w={50} defaultValue="1" />
              <PageCount>页共 1 页</PageCount>
              <Sep />
              <PageButton aria-label="下一页"><PageIcon dir="r" /></PageButton>
              <PageButton aria-label="末页"><PageIcon dir="r" end /></PageButton>
              <Sep />
              <PagerText><label htmlFor="size">每页显示条数</label></PagerText>
              <SelectBox $w={83}>
                <select id="size"><option>50</option></select>
                <DropArrow />
              </SelectBox>
              <PagerStatus>显示 1 - 8，共 8 条</PagerStatus>
            </Pager>
          </Panel>
          <ConsoleBar><ConsoleButton>CLI 控制台</ConsoleButton></ConsoleBar>
        </Main>
      </Body>

      <Footer>
        版权所有 © 华为技术有限公司2014-2018 。保留一切权利。
        <Watermark>CSDN @君衍.▯</Watermark>
      </Footer>
    </Page>
  );
}
